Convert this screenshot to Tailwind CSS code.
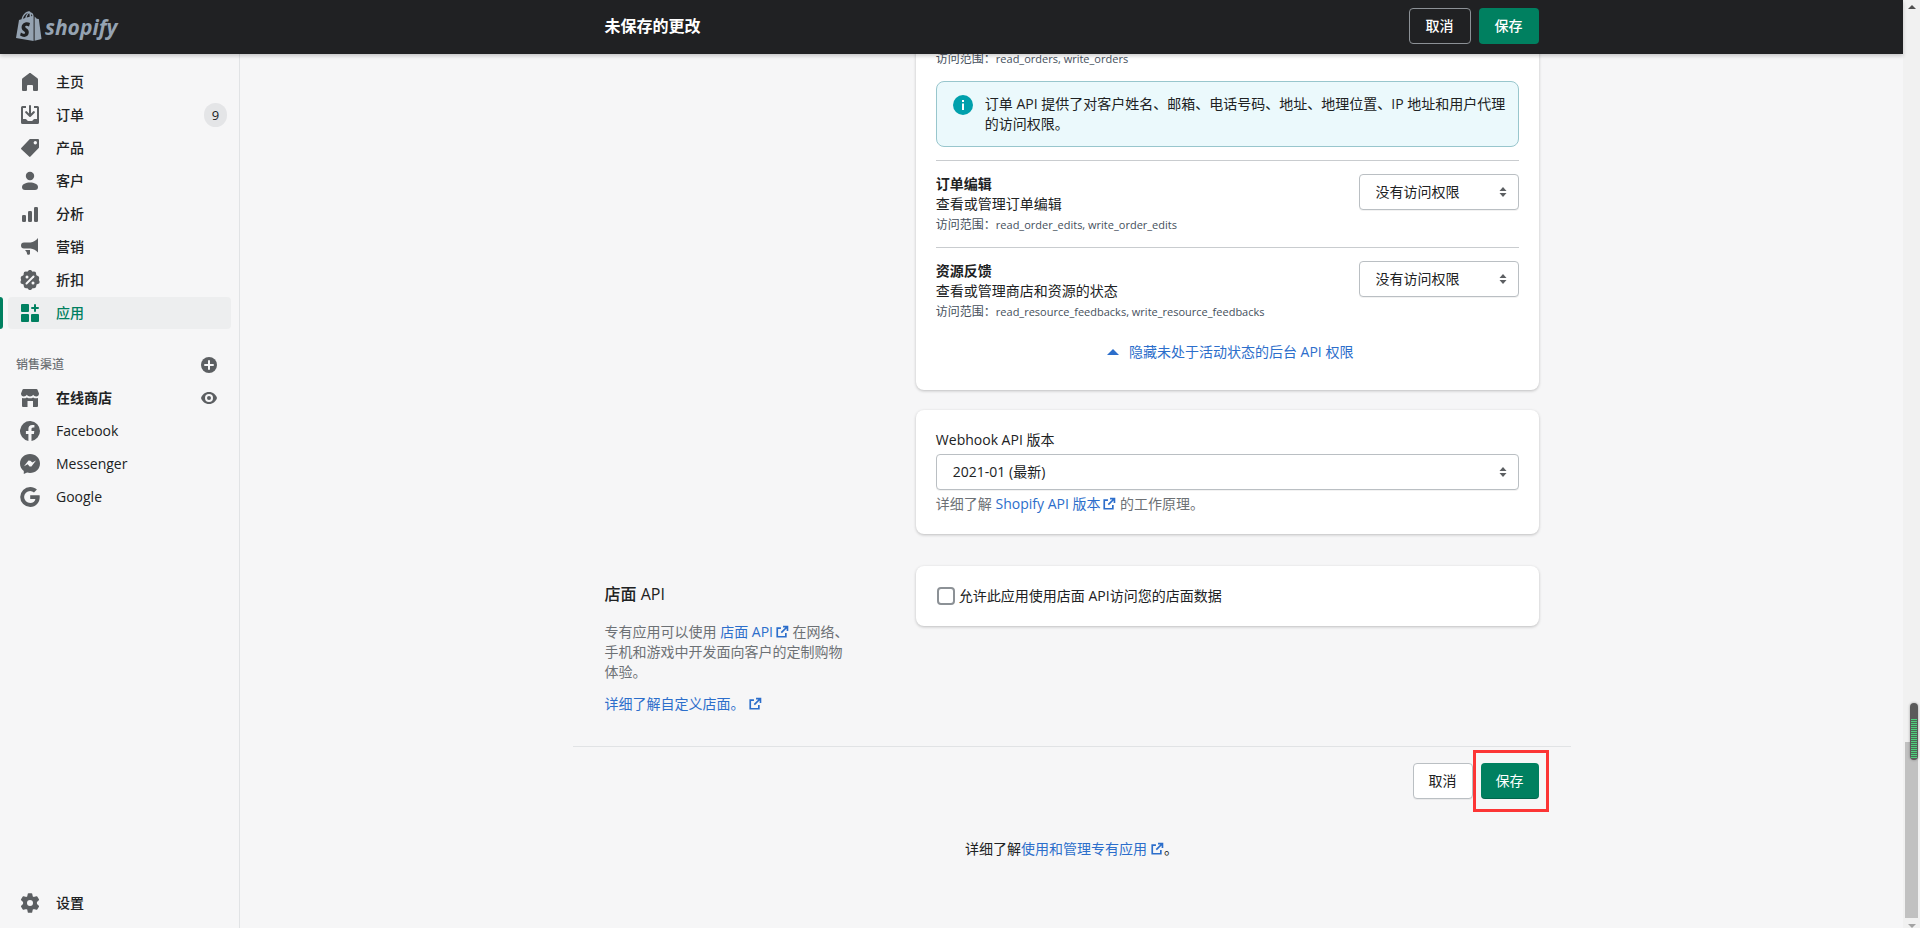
<!DOCTYPE html>
<html lang="zh-CN">
<head>
  <meta charset="utf-8" />
  <meta content="width=device-width, initial-scale=1.0" name="viewport" />
  <title>Shopify</title>
  <script src="https://cdn.jsdelivr.net/npm/@tailwindcss/browser@4"></script>
</head>
<body class="flex h-screen overflow-hidden bg-[#f6f6f7] font-['Open_Sans','Noto_Sans_CJK_SC',sans-serif] text-[14px] leading-[20px] text-[#202223]">
  <!-- Shared icons -->
  <svg class="hidden">
    <symbol id="external" viewBox="0 0 20 20">
      <path fill="none" stroke="#2c6ecb" stroke-width="2.400" d="M8.500 4.500H3.200v12.300h12.300V11.500M11.500 2.200h6.300v6.300M17.500 2.500L9 11" />
    </symbol>
    <symbol id="updown" viewBox="0 0 8 12">
      <path d="M4 1l3.500 4h-7zM4 11l3.500-4h-7z" />
    </symbol>
  </svg>

  <div class="flex min-w-0 flex-1 flex-col">
    <!-- Top bar -->
    <header class="relative z-10 flex h-[54px] shrink-0 items-center bg-[#202123] pb-0.5 shadow-[0_2px_4px_rgba(0,0,0,0.2)]">
      <a href="#" class="flex w-60 shrink-0 items-center pl-4" aria-label="shopify">
        <svg width="104" height="32" viewBox="0 -1 104 32" fill="#95a3b2">
          <path fill-rule="evenodd" d="M3 9l2.500-.8C6.500 3.800 9.300 1 12 .4c1.300-.3 2.300.2 2.800 1.200 1.600.2 2.500 1.500 2.800 3.400V30L0 27zM6.900 7.800l2.300-.7c.5-2.400 1.500-4.100 2.800-5.200-2.300.6-4.200 2.900-5.100 5.900zm3.800-1.200l3-.9c0-1.300-.1-2.500-.5-3.400-1.300.7-2.100 2.300-2.500 4.300zm4.500-1.400l1.100-.3c-.2-.9-.5-1.400-1.200-1.700.1.600.1 1.300.1 2zM14 12c-4.200-2-8.400.4-8.400 4.400 0 3.300 3.500 3.700 3.500 5.400 0 1.500-2.100 1.100-4.200-.3l-.8 3.100c3.800 2.700 8.700 1.300 8.700-3.300 0-3.600-3.600-4-3.600-5.500 0-1.300 1.900-1.300 3.800-.4z" />
          <path d="M18.600 5.500l2.200 2.300 2 .3L25.500 28l-6.900 1.800z" />
          <text x="29" y="24" font-family="Open Sans" font-size="21" font-weight="700" font-style="italic">shopify</text>
        </svg>
      </a>
      <div class="min-w-0 flex-1">
        <div class="mx-auto flex max-w-[998px] items-center px-8">
          <h2 class="flex-1 text-[16px] font-semibold text-white">未保存的更改</h2>
          <div class="flex gap-2">
            <button class="h-9 rounded border border-[#8c9196] px-4 font-medium text-white">取消</button>
            <button class="h-9 rounded bg-[#008060] px-4 font-medium text-white">保存</button>
          </div>
        </div>
      </div>
    </header>

    <div class="flex min-h-0 flex-1">
      <!-- Sidebar -->
      <nav class="flex w-60 shrink-0 flex-col border-r border-[#e1e3e5] pt-3 pb-[9px] font-medium">
        <ul class="flex flex-col gap-px">
          <li>
            <a href="#" class="flex h-8 items-center gap-4 pl-5">
              <svg class="size-5 fill-[#5c5f62]" viewBox="0 0 20 20"><path d="M10 1c.4 0 .8.100 1.100.4l6.300 4.900c.4.300.6.800.6 1.300V18a1 1 0 01-1 1h-3a1 1 0 01-1-1v-4a1 1 0 00-1-1H8a1 1 0 00-1 1v4a1 1 0 01-1 1H3a1 1 0 01-1-1V7.600c0-.5.2-1 .6-1.300l6.300-4.900C9.200 1.100 9.600 1 10 1z" /></svg>
              主页
            </a>
          </li>
          <li>
            <a href="#" class="flex h-8 items-center gap-4 pl-5">
              <svg class="size-5 fill-[#5c5f62]" viewBox="0 0 20 20"><path d="M11 1a1 1 0 10-2 0v7.600L6.700 6.300a1 1 0 00-1.400 1.400l4 4a1 1 0 001.400 0l4-4a1 1 0 00-1.400-1.400L11 8.600V1z" /><path d="M2.500 1A1.500 1.500 0 001 2.500v15A1.500 1.500 0 002.500 19h15a1.500 1.500 0 001.500-1.500v-15A1.500 1.500 0 0017.500 1H14v2h3v11h-2.500c-.5 0-.8.200-1 .5l-.8 1c-.200.300-.5.5-1 .5H8.300c-.5 0-.8-.200-1-.5l-.8-1c-.200-.300-.5-.5-1-.5H3V3h3V1z" /></svg>
              <span class="flex-1">订单</span>
              <span class="mr-3 flex h-6 min-w-[23px] items-center justify-center rounded-full bg-[#e4e5e7] text-[13px] font-normal">9</span>
            </a>
          </li>
          <li>
            <a href="#" class="flex h-8 items-center gap-4 pl-5">
              <svg class="size-5 fill-[#5c5f62]" viewBox="0 0 20 20"><path fill-rule="evenodd" d="M10.300 1H18a1 1 0 011 1v7.200c0 .3-.1.500-.3.700l-8.200 8.700a1 1 0 01-1.400 0L1.300 11.300a1 1 0 010-1.400L9.600 1.300c.2-.2.400-.3.700-.3zM15.300 6.500a1.700 1.700 0 100-3.400 1.700 1.700 0 000 3.400z" /></svg>
              产品
            </a>
          </li>
          <li>
            <a href="#" class="flex h-8 items-center gap-4 pl-5">
              <svg class="size-5 fill-[#5c5f62]" viewBox="0 0 20 20"><circle cx="10" cy="5" r="4.200" /><path d="M2 16c0-3 4-4.500 8-4.500s8 1.500 8 4.500c0 1.700-1 3-3 3H5c-2 0-3-1.300-3-3z" /></svg>
              客户
            </a>
          </li>
          <li>
            <a href="#" class="flex h-8 items-center gap-4 pl-5">
              <svg class="size-5 fill-[#5c5f62]" viewBox="0 0 20 20"><rect x="2" y="11" width="4" height="7" rx="1.300" /><rect x="8" y="7" width="4" height="11" rx="1.300" /><rect x="14" y="3" width="4" height="15" rx="1.300" /></svg>
              分析
            </a>
          </li>
          <li>
            <a href="#" class="flex h-8 items-center gap-4 pl-5">
              <svg class="size-5 fill-[#5c5f62]" viewBox="0 0 20 20"><path d="M18 1v14.500c-2-2.200-4.600-3.600-7.500-4H4a3 3 0 01-3-3 3 3 0 013-3h6.500c2.900-.4 5.500-2 7.500-4.500zM5 13h5v3.500c0 1.500-2.400 1.800-2.900.4L6.600 15z" /></svg>
              营销
            </a>
          </li>
          <li>
            <a href="#" class="flex h-8 items-center gap-4 pl-5">
              <svg class="size-5" viewBox="0 0 20 20"><path fill="#5c5f62" d="M8.300.8a2.300 2.300 0 013.400 0l.8.900 1.200-.1a2.300 2.300 0 012.500 2.300V5l1 .8c1.500.4 2.200 1.400 1.900 2.900L18.800 10l.6 1.100a2.300 2.300 0 01-1.700 3L16.500 14.600l-.3 1.600a2.300 2.300 0 01-2.500 2l-1.200.1-.8.9a2.300 2.300 0 01-3.400 0l-.8-.9-1.200-.1a2.300 2.300 0 01-2.500-2l-.2-1.600-1.300-.5a2.300 2.300 0 01-1.600-3L1.200 10 .8 8.700c-.3-1.500.4-2.500 1.800-2.900l1-.8V3.900a2.300 2.300 0 012.500-2.300l1.200.1z" /><path stroke="#f6f6f7" stroke-width="2" stroke-linecap="round" d="M6.500 13.500l7-7" /><circle cx="7" cy="7" r="1.500" fill="#f6f6f7" /><circle cx="13" cy="13" r="1.500" fill="#f6f6f7" /></svg>
              折扣
            </a>
          </li>
          <li class="flex">
            <span class="w-[3px] rounded-r bg-[#008060]"></span>
            <a href="#" class="mr-2 ml-[5px] flex h-8 flex-1 items-center gap-4 rounded bg-[#edeeef] pl-3 text-[#008060]">
              <svg class="size-5 fill-[#008060]" viewBox="0 0 20 20"><rect x="1" y="1" width="8" height="8" rx="1" /><rect x="1" y="11" width="8" height="8" rx="1" /><rect x="11" y="11" width="8" height="8" rx="1" /><path d="M14 2a1 1 0 012 0v2h2a1 1 0 010 2h-2v2a1 1 0 01-2 0V6h-2a1 1 0 010-2h2z" /></svg>
              应用
            </a>
          </li>
        </ul>

        <div class="mt-[26px] mb-[7px] flex items-center justify-between pr-[22px] pl-4">
          <h3 class="text-[12px] text-[#6d7175]">销售渠道</h3>
          <button aria-label="添加销售渠道">
            <svg class="size-4" viewBox="0 0 16 16"><circle cx="8" cy="8" r="8" fill="#5c5f62" /><path stroke="#f6f6f7" stroke-width="2" stroke-linecap="round" d="M8 4v8M4 8h8" /></svg>
          </button>
        </div>
        <ul class="flex flex-col gap-px">
          <li>
            <a href="#" class="flex h-8 items-center gap-4 pr-[22px] pl-5">
              <svg class="size-5 fill-[#5c5f62]" viewBox="0 0 20 20"><path d="M3.500 1h13c.4 0 .7.200.9.600L19 5.500c0 1.800-1.200 3-2.800 3-1.300 0-2.200-.6-3-1.700-.8 1.100-1.800 1.700-3.200 1.700s-2.400-.6-3.200-1.700C6 7.900 5 8.500 3.800 8.500 2.200 8.500 1 7.300 1 5.500l1.600-3.900c.2-.4.5-.6.9-.6z" /><path d="M2 10c1.700.6 3.500.4 4.900-.6 2 1.200 4.200 1.200 6.200 0 1.400 1 3.200 1.200 4.900.6v8a1 1 0 01-1 1h-4v-6H7.500v6H3a1 1 0 01-1-1z" /></svg>
              <span class="flex-1 font-semibold">在线商店</span>
              <svg class="size-4" viewBox="0 0 16 16"><path fill="#5c5f62" d="M8 2c4 0 7 2.700 8 6-1 3.300-4 6-8 6s-7-2.700-8-6c1-3.300 4-6 8-6z" /><circle cx="8" cy="8" r="4" fill="#f6f6f7" /><circle cx="8" cy="8" r="2" fill="#5c5f62" /></svg>
            </a>
          </li>
          <li>
            <a href="#" class="flex h-8 items-center gap-4 pl-5 font-normal">
              <svg class="size-5 fill-[#5c5f62]" viewBox="0 0 20 20"><path d="M20 10a10 10 0 10-11.600 9.900v-7H5.900V10h2.500V7.800c0-2.500 1.500-3.900 3.800-3.900 1.100 0 2.200.2 2.200.2v2.500h-1.300c-1.200 0-1.600.8-1.600 1.600V10h2.800l-.4 2.900h-2.400v7A10 10 0 0020 10z" /></svg>
              Facebook
            </a>
          </li>
          <li>
            <a href="#" class="flex h-8 items-center gap-4 pl-5 font-normal">
              <svg class="size-5 fill-[#5c5f62]" viewBox="0 0 20 20"><path fill-rule="evenodd" d="M10 0c5.600 0 10 4.100 10 9.500S15.600 19 10 19c-1 0-2-.1-2.900-.4L3.800 20V17C1.400 15.200 0 12.600 0 9.500 0 4.100 4.400 0 10 0zM4 12.300l3.700-2 1.900 2.100 1.800.1 4.600-6-3.700 2.100-1.900-1.900-1.900-.1z" /></svg>
              Messenger
            </a>
          </li>
          <li>
            <a href="#" class="flex h-8 items-center gap-4 pl-5 font-normal">
              <svg class="size-5 fill-[#5c5f62]" viewBox="0 0 20 20"><path d="M10.200 8.200h9.400c.9 6.400-3 11.800-9.400 11.800a10 10 0 110-20c2.700 0 5 1 6.700 2.600l-2.900 2.800a5.600 5.600 0 00-3.800-1.500 6.100 6.100 0 000 12.200c2.800 0 4.700-1.600 5.200-4h-5.200z" /></svg>
              Google
            </a>
          </li>
        </ul>
        <a href="#" class="mt-auto flex h-8 items-center gap-4 pl-5">
          <svg class="size-5" viewBox="0 0 20 20"><path fill="#5c5f62" stroke="#5c5f62" stroke-width="1.500" stroke-linejoin="round" d="M8.500 1h3l.6 2.800 1.700 1 2.800-.9 1.700 2.800-2.100 2v2.600l2.100 2-1.700 2.800-2.800-.9-1.700 1-.6 2.800h-3l-.6-2.800-1.700-1-2.800.9-1.700-2.800 2.100-2V8.700l-2.100-2 1.700-2.800 2.800.9 1.700-1z" /><circle cx="10" cy="10" r="3" fill="#f6f6f7" /></svg>
          设置
        </a>
      </nav>

      <!-- Page -->
      <main class="min-w-0 flex-1">
        <div class="mx-auto max-w-[998px]">
          <div class="flex flex-col items-end px-8">
            <section class="-mt-6 w-2/3 rounded-lg bg-white px-5 pt-[19px] pb-7 shadow-[0_1px_3px_rgba(23,24,24,0.25)]">
              <p class="text-[12px] text-[#45505c]">访问范围：<span class="text-[11px]">read_orders, write_orders</span></p>
              <div class="mt-3 flex gap-3 rounded-lg border border-[#98c6cd] bg-[#ebf9fc] py-3 pr-3 pl-4">
                <svg class="mt-px size-5 shrink-0" viewBox="0 0 20 20"><circle cx="10" cy="10" r="10" fill="#00a0ac" /><path fill="#fff" d="M9 5h2v2H9zM9 8.500h2V15H9z" /></svg>
                <p>订单 API 提供了对客户姓名、邮箱、电话号码、地址、地理位置、IP 地址和用户代理的访问权限。</p>
              </div>

              <div class="mt-[13px] flex items-start justify-between border-t border-[#c9cccf] pt-[13px] pb-3">
                <div>
                  <h3 class="font-semibold">订单编辑</h3>
                  <p>查看或管理订单编辑</p>
                  <p class="mt-px text-[12px] text-[#45505c]">访问范围：<span class="text-[11px]">read_order_edits, write_order_edits</span></p>
                </div>
                <div class="relative w-40">
                  <select aria-label="订单编辑" class="h-9 w-full appearance-none rounded border border-[#babfc3] bg-white px-4 shadow-[0_1px_0_rgba(0,0,0,0.05)]">
                    <option>没有访问权限</option>
                  </select>
                  <svg class="pointer-events-none absolute top-3 right-3 h-3 w-2 fill-[#5c5f62]"><use href="#updown" /></svg>
                </div>
              </div>

              <div class="flex items-start justify-between border-t border-[#c9cccf] pt-[13px]">
                <div>
                  <h3 class="font-semibold">资源反馈</h3>
                  <p>查看或管理商店和资源的状态</p>
                  <p class="mt-px text-[12px] text-[#45505c]">访问范围：<span class="text-[11px]">read_resource_feedbacks, write_resource_feedbacks</span></p>
                </div>
                <div class="relative w-40">
                  <select aria-label="资源反馈" class="h-9 w-full appearance-none rounded border border-[#babfc3] bg-white px-4 shadow-[0_1px_0_rgba(0,0,0,0.05)]">
                    <option>没有访问权限</option>
                  </select>
                  <svg class="pointer-events-none absolute top-3 right-3 h-3 w-2 fill-[#5c5f62]"><use href="#updown" /></svg>
                </div>
              </div>

              <button class="mx-auto mt-5 flex items-center gap-2.5 pl-1.5 text-[#2c6ecb]">
                <svg class="h-1.5 w-3 fill-[#2c6ecb]" viewBox="0 0 12 6"><path d="M6 0l6 6H0z" /></svg>
                隐藏未处于活动状态的后台 API 权限
              </button>
            </section>

            <section class="mt-5 w-2/3 rounded-lg bg-white p-5 shadow-[0_1px_3px_rgba(23,24,24,0.25)]">
              <label for="version" class="block">Webhook API 版本</label>
              <div class="relative my-1">
                <select id="version" class="h-9 w-full appearance-none rounded border border-[#babfc3] bg-white px-4 shadow-[0_1px_0_rgba(0,0,0,0.05)]">
                  <option>2021-01 (最新)</option>
                </select>
                <svg class="pointer-events-none absolute top-3 right-3 h-3 w-2 fill-[#5c5f62]"><use href="#updown" /></svg>
              </div>
              <p class="text-[#6d7175]">详细了解 <a href="#" class="text-[#2c6ecb]">Shopify API 版本<svg class="mb-0.5 ml-0.5 inline size-3.5"><use href="#external" /></svg></a> 的工作原理。</p>
            </section>
          </div>

          <div class="mt-8 flex justify-between border-b border-[#e1e3e5] px-8 pb-8">
            <div class="w-[248px]">
              <h2 class="mt-[18px] text-[16px] font-medium">店面 API</h2>
              <p class="mt-[18px] text-[#6d7175]">专有应用可以使用 <a href="#" class="text-[#2c6ecb]">店面 API<svg class="mb-0.5 ml-0.5 inline size-3.5"><use href="#external" /></svg></a> 在网络、手机和游戏中开发面向客户的定制购物体验。</p>
              <p class="mt-3"><a href="#" class="text-[#2c6ecb]">详细了解自定义店面。<svg class="mb-0.5 ml-[3px] inline size-3.5"><use href="#external" /></svg></a></p>
            </div>
            <section class="w-2/3 self-start rounded-lg bg-white p-5 shadow-[0_1px_3px_rgba(23,24,24,0.25)]">
              <label class="flex items-center gap-1">
                <input type="checkbox" class="ml-px size-[18px] appearance-none rounded border-2 border-[#8c9196] bg-white" />
                允许此应用使用店面 API访问您的店面数据
              </label>
            </section>
          </div>

          <div class="mt-4 flex justify-end gap-2 px-8">
            <button class="h-9 rounded border border-[#babfc3] bg-white px-[15px] shadow-[0_1px_0_rgba(0,0,0,0.05)]">取消</button>
            <div class="relative">
              <button class="h-9 rounded bg-[#008060] px-[15px] text-white shadow-[inset_0_-1px_0_rgba(0,0,0,0.2)]">保存</button>
              <div class="pointer-events-none absolute -inset-x-2 -inset-y-[13px] -right-2.5 border-3 border-[#fc3535]"></div>
            </div>
          </div>

          <p class="mt-10 text-center">详细了解<a href="#" class="text-[#2c6ecb]">使用和管理专有应用<svg class="mb-0.5 ml-[3px] inline size-3.5"><use href="#external" /></svg></a>。</p>
        </div>
      </main>
    </div>
  </div>

  <!-- Scrollbar -->
  <div class="relative flex w-[17px] shrink-0 flex-col items-center bg-[#f1f1f1] pt-1">
    <svg class="h-2 w-2" viewBox="0 0 8 8"><path fill="#505050" d="M4 1l4 4H0z" /></svg>
    <div class="mt-auto mb-1.5 h-[19%] w-[13px] bg-[#c1c1c1]"></div>
    <svg class="h-1 w-2" viewBox="0 0 8 4"><path fill="#a3a3a3" d="M0 0h8L4 4z" /></svg>
    <div class="absolute top-[703px] right-0.5 h-[57px] w-2 overflow-hidden rounded-full bg-[#5a5a5a] px-px pt-4 pb-0.5 shadow-[0_0_2px_1px_rgba(0,0,0,0.15)]">
      <div class="h-full bg-[repeating-linear-gradient(#4fd07c_0_1px,#4b6a55_1px_2px)]"></div>
    </div>
  </div>
</body>
</html>
